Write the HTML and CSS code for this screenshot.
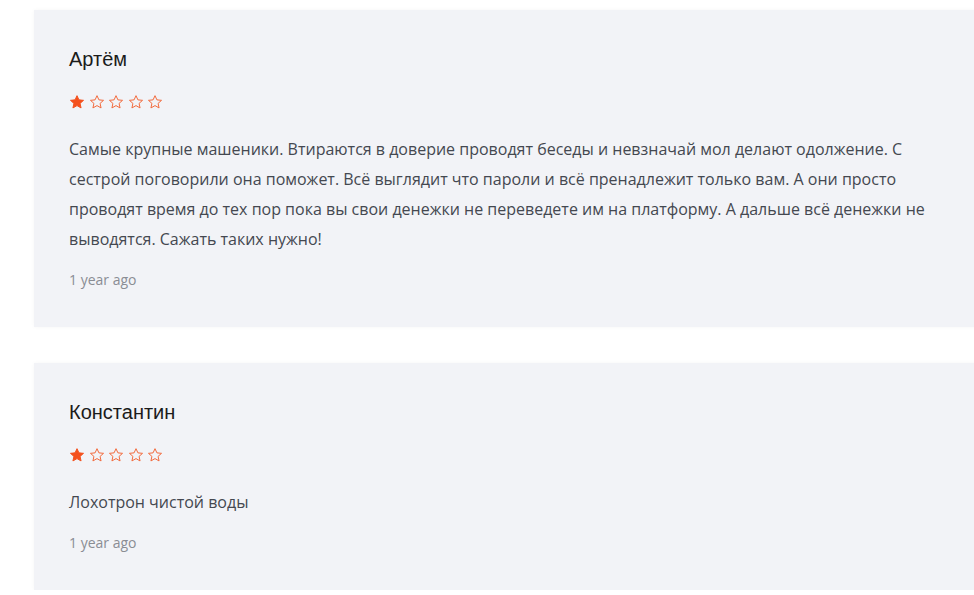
FILE: index.html
```html
<!DOCTYPE html>
<html lang="ru">
<head>
<meta charset="utf-8">
<link rel="stylesheet" href="styles.css">
</head>
<body>
<div class="reviews">
  <div class="review">
    <div class="name">Артём</div>
    <div class="stars">
      <svg class="star full" viewBox="0 0 24 24"><path d="M12 2.5l2.9 6.3 6.9.7-5.2 4.6 1.5 6.8L12 17.4l-6.1 3.5 1.5-6.8L2.2 9.5l6.9-.7z"/></svg>
      <svg class="star" viewBox="0 0 24 24"><path d="M12 2.5l2.9 6.3 6.9.7-5.2 4.6 1.5 6.8L12 17.4l-6.1 3.5 1.5-6.8L2.2 9.5l6.9-.7z"/></svg>
      <svg class="star" viewBox="0 0 24 24"><path d="M12 2.5l2.9 6.3 6.9.7-5.2 4.6 1.5 6.8L12 17.4l-6.1 3.5 1.5-6.8L2.2 9.5l6.9-.7z"/></svg>
      <svg class="star" viewBox="0 0 24 24"><path d="M12 2.5l2.9 6.3 6.9.7-5.2 4.6 1.5 6.8L12 17.4l-6.1 3.5 1.5-6.8L2.2 9.5l6.9-.7z"/></svg>
      <svg class="star" viewBox="0 0 24 24"><path d="M12 2.5l2.9 6.3 6.9.7-5.2 4.6 1.5 6.8L12 17.4l-6.1 3.5 1.5-6.8L2.2 9.5l6.9-.7z"/></svg>
    </div>
    <p class="text">Самые крупные машеники. Втираются в доверие проводят беседы и невзначай мол делают одолжение. С сестрой поговорили она поможет. Всё выглядит что пароли и всё пренадлежит только вам. А они просто проводят время до тех пор пока вы свои денежки не переведете им на платформу. А дальше всё денежки не выводятся. Сажать таких нужно!</p>
    <div class="time">1 year ago</div>
  </div>
  <div class="review">
    <div class="name">Константин</div>
    <div class="stars">
      <svg class="star full" viewBox="0 0 24 24"><path d="M12 2.5l2.9 6.3 6.9.7-5.2 4.6 1.5 6.8L12 17.4l-6.1 3.5 1.5-6.8L2.2 9.5l6.9-.7z"/></svg>
      <svg class="star" viewBox="0 0 24 24"><path d="M12 2.5l2.9 6.3 6.9.7-5.2 4.6 1.5 6.8L12 17.4l-6.1 3.5 1.5-6.8L2.2 9.5l6.9-.7z"/></svg>
      <svg class="star" viewBox="0 0 24 24"><path d="M12 2.5l2.9 6.3 6.9.7-5.2 4.6 1.5 6.8L12 17.4l-6.1 3.5 1.5-6.8L2.2 9.5l6.9-.7z"/></svg>
      <svg class="star" viewBox="0 0 24 24"><path d="M12 2.5l2.9 6.3 6.9.7-5.2 4.6 1.5 6.8L12 17.4l-6.1 3.5 1.5-6.8L2.2 9.5l6.9-.7z"/></svg>
      <svg class="star" viewBox="0 0 24 24"><path d="M12 2.5l2.9 6.3 6.9.7-5.2 4.6 1.5 6.8L12 17.4l-6.1 3.5 1.5-6.8L2.2 9.5l6.9-.7z"/></svg>
    </div>
    <p class="text">Лохотрон чистой воды</p>
    <div class="time">1 year ago</div>
  </div>
</div>
</body>
</html>
```

FILE: styles.css
```css
html, body {
  margin: 0;
  padding: 0;
  background: #ffffff;
  overflow: hidden;
}
.reviews {
  display: flex;
  flex-direction: column;
  gap: 36px;
  padding: 10px 0 0 34px;
  width: 1000px;
}
.review {
  background: #f2f3f7;
  box-shadow: 0 0 4px rgba(0, 0, 0, 0.04);
  padding: 37px 35px 37px 35px;
}
.name {
  font-family: "Liberation Sans", Arial, sans-serif;
  font-size: 20px;
  line-height: 24px;
  color: #1b1b1b;
}
.stars {
  display: flex;
  gap: 3.5px;
  margin-top: 23px;
  height: 16px;
}
.star {
  width: 16px;
  height: 16px;
  fill: none;
  stroke: #f26a3d;
  stroke-width: 1.5;
  stroke-linejoin: round;
}
.star.full {
  fill: #f4511e;
  stroke: #f4511e;
}
.text {
  margin: 24px 0 0 0;
  width: 870px;
  font-family: "Open Sans", sans-serif;
  font-size: 16px;
  line-height: 30px;
  color: #444850;
}
.time {
  margin-top: 16px;
  font-family: "Open Sans", sans-serif;
  font-size: 14px;
  line-height: 20px;
  color: #8a8d94;
}
```
